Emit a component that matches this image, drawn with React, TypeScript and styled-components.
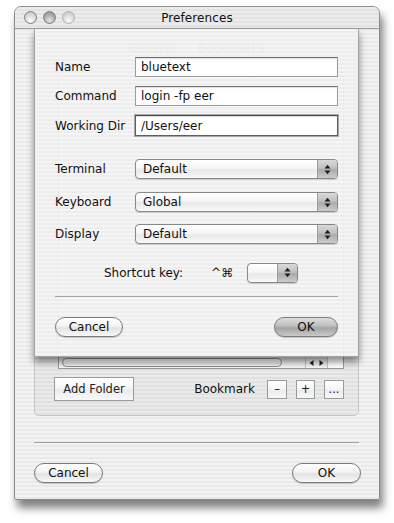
import React from "react";
import styled, { createGlobalStyle } from "styled-components";

const GlobalStyle = createGlobalStyle`
  html, body {
    margin:0;
    padding:0;
    background:#ffffff;
  }
  body {
    font-family:"DejaVu Sans", "Liberation Sans", sans-serif;
    font-size:12px;
    color:#111;
  }
`;

const pinstripe = `repeating-linear-gradient(180deg, #f3f3f3 0px, #f3f3f3 2px, #e9e9e9 2px, #e9e9e9 4px)`;

const Page = styled.div`
  width:394px;
  height:523px;
  box-sizing:border-box;
  padding:6px 0 0 14px;
`;

const Window = styled.div`
  position:relative;
  width:366px;
  height:494px;
  box-sizing:border-box;
  display:flex;
  flex-direction:column;
  border:1px solid #8c8c8c;
  border-radius:7px 7px 2px 2px;
  background:${pinstripe};
  box-shadow:3px 8px 9px rgba(0,0,0,0.5);
`;

const TitleBar = styled.div`
  height:21px;
  display:grid;
  grid-template-columns:1fr auto 1fr;
  align-items:center;
  padding:0 9px;
  border-radius:6px 6px 0 0;
  border-bottom:1px solid #9a9a9a;
  background:repeating-linear-gradient(180deg, #ececec 0px, #ececec 2px, #e2e2e2 2px, #e2e2e2 4px);
`;

const Lights = styled.div`
  display:flex;
  gap:6px;
`;

const Light = styled.span<{ $tone: "light" | "dark" | "dim" }>`
  width:13px;
  height:13px;
  border-radius:50%;
  box-sizing:border-box;
  border:1px solid ${({ $tone }) => $tone === "dim" ? "#b0b0b0" : "#7c7c7c"};
  background:${({ $tone }) => $tone === "dark"
    ? "radial-gradient(circle at 50% 75%, #e6e6e6 0%, #b0b0b0 50%, #8a8a8a 100%)"
    : "radial-gradient(circle at 50% 75%, #fbfbfb 0%, #dcdcdc 50%, #bdbdbd 100%)"};
`;

const Title = styled.div`
  font-size:12px;
  color:#111;
  letter-spacing:0.1px;
`;

const Body = styled.div`
  flex:1;
  display:flex;
  flex-direction:column;
  padding:0 20px 16px 19px;
`;

const TabBar = styled.div`
  height:30px;
  display:flex;
  justify-content:center;
  align-items:flex-end;
  gap:22px;
  padding-bottom:4px;
  box-sizing:border-box;
  color:#666;
`;

const GroupBox = styled.div`
  height:357px;
  box-sizing:border-box;
  display:flex;
  flex-direction:column;
  border:1px solid #c6c6c6;
  border-radius:5px;
  background:rgba(0,0,0,0.035);
  padding:16px 14px 14px 19px;
`;

const TableView = styled.div`
  flex:1;
  display:flex;
  flex-direction:column;
  margin-left:4px;
  border:1px solid #9a9a9a;
  background:#fafafa;
`;

const TableBody = styled.div`
  flex:1;
`;

const HScroll = styled.div`
  height:11px;
  display:flex;
  border-top:1px solid #b4b4b4;
  background:linear-gradient(180deg, #e4e4e4, #f7f7f7);
`;

const Track = styled.div`
  flex:1;
  padding:0 0 0 3px;
  display:flex;
  align-items:center;
`;

const Thumb = styled.div`
  width:220px;
  height:9px;
  box-sizing:border-box;
  border:1px solid #8a8a8a;
  border-radius:5px;
  background:linear-gradient(180deg, #ffffff, #ececec 50%, #dddddd 51%, #f6f6f6);
`;

const ScrollArrows = styled.div`
  width:21px;
  display:flex;
  align-items:center;
  justify-content:space-around;
  border-left:1px solid #c4c4c4;
`;

const Corner = styled.div`
  width:15px;
  border-left:1px solid #c4c4c4;
  background:#fff;
`;

const ToolRow = styled.div`
  display:flex;
  align-items:center;
  margin-top:8px;
`;

const BevelButton = styled.div<{ $width: number; $height: number }>`
  width:${({ $width }) => $width}px;
  height:${({ $height }) => $height}px;
  box-sizing:border-box;
  display:flex;
  align-items:center;
  justify-content:center;
  border:1px solid #9a9a9a;
  background:linear-gradient(180deg, #ffffff, #f4f4f4 50%, #ebebeb 51%, #f8f8f8);
  font-size:11.5px;
  color:#222;
`;

const BookmarkLabel = styled.span`
  margin-left:auto;
  margin-right:12px;
  font-size:12px;
`;

const SmallButtons = styled.div`
  display:flex;
  gap:9px;
`;

const Separator = styled.div<{ $top: number }>`
  margin-top:${({ $top }) => $top}px;
  height:1px;
  background:#a2a2a2;
`;

const ButtonBar = styled.div<{ $top: number; $right?: number }>`
  margin-top:${({ $top }) => $top}px;
  margin-right:${({ $right }) => $right ?? 0}px;
  display:flex;
  justify-content:space-between;
`;

const PushButton = styled.div<{ $width: number; $default?: boolean }>`
  width:${({ $width }) => $width}px;
  height:20px;
  box-sizing:border-box;
  display:flex;
  align-items:center;
  justify-content:center;
  border-radius:10px;
  border:1px solid #7b7b7b;
  background:${({ $default }) => $default
    ? "linear-gradient(180deg, #dedede 0%, #bdbdbd 45%, #a4a4a4 55%, #c9c9c9 100%)"
    : "linear-gradient(180deg, #ffffff 0%, #f3f3f3 45%, #e3e3e3 55%, #f8f8f8 100%)"};
  box-shadow:0 1px 1px rgba(0,0,0,0.2);
  font-size:12px;
  color:#111;
`;

const Sheet = styled.div`
  position:absolute;
  top:22px;
  left:19px;
  width:325px;
  height:328px;
  box-sizing:border-box;
  display:flex;
  flex-direction:column;
  padding:28px 20px 0 20px;
  border:1px solid #a4a4a4;
  border-top:none;
  background:repeating-linear-gradient(180deg, rgba(245,245,245,0.95) 0px, rgba(245,245,245,0.95) 2px, rgba(237,237,237,0.95) 2px, rgba(237,237,237,0.95) 4px);
  box-shadow:0 5px 7px rgba(0,0,0,0.45);
`;

const FormRow = styled.div<{ $top: number }>`
  display:flex;
  align-items:center;
  margin-top:${({ $top }) => $top}px;
`;

const Label = styled.span`
  width:80px;
  font-size:12px;
  color:#111;
`;

const TextField = styled.div<{ $focused?: boolean }>`
  flex:1;
  height:${({ $focused }) => $focused ? 21 : 20}px;
  box-sizing:border-box;
  padding-left:5px;
  display:flex;
  align-items:center;
  background:#ffffff;
  border:1px solid ${({ $focused }) => $focused ? "#5e5e5e" : "#9b9b9b"};
  border-top-color:${({ $focused }) => $focused ? "#4a4a4a" : "#707070"};
  box-shadow:${({ $focused }) => $focused
    ? "0 0 0 1px #a8a8a8, inset 0 1px 1px rgba(0,0,0,0.15)"
    : "inset 0 1px 1px rgba(0,0,0,0.12)"};
  font-size:12px;
`;

const Popup = styled.div<{ $width?: number }>`
  ${({ $width }) => $width ? `width:${$width}px;` : "flex:1;"}
  height:20px;
  box-sizing:border-box;
  display:flex;
  border:1px solid #888;
  border-radius:4px;
  overflow:hidden;
  background:linear-gradient(180deg, #ffffff 0%, #f6f6f6 45%, #e8e8e8 55%, #f9f9f9 100%);
  box-shadow:0 1px 1px rgba(0,0,0,0.15);
`;

const PopupValue = styled.span`
  flex:1;
  padding-left:7px;
  display:flex;
  align-items:center;
  font-size:12px;
`;

const PopupArrows = styled.span`
  width:19px;
  display:flex;
  align-items:center;
  justify-content:center;
  border-left:1px solid #9c9c9c;
  background:linear-gradient(180deg, #dadada 0%, #c0c0c0 45%, #aaaaaa 55%, #cbcbcb 100%);
`;

const ShortcutRow = styled.div`
  display:flex;
  align-items:center;
  margin:18px 0 0 49px;
  height:21px;
`;

const Modifiers = styled.span`
  margin:0 14px 0 28px;
  font-size:12px;
`;

const StepArrows = () => (
  <svg width="7" height="11" viewBox="0 0 7 11">
    <polygon points="0.5,4.5 3.5,0.8 6.5,4.5" fill="#1e1e1e" />
    <polygon points="0.5,6.5 3.5,10.2 6.5,6.5" fill="#1e1e1e" />
  </svg>
);

const ScrollArrow = ({ dir }: { dir: "left" | "right" }) => (
  <svg width="5" height="6" viewBox="0 0 5 6">
    <polygon points={dir === "left" ? "4.5,0 4.5,6 0.5,3" : "0.5,0 0.5,6 4.5,3"} fill="#222" />
  </svg>
);

const PopupButton = ({ value, width }: { value?: string; width?: number }) => (
  <Popup $width={width}>
    <PopupValue>{value}</PopupValue>
    <PopupArrows><StepArrows /></PopupArrows>
  </Popup>
);

export default function App() {
  return (
    <Page>
      <GlobalStyle />
      <Window>
        <TitleBar>
          <Lights>
            <Light $tone="light" />
            <Light $tone="dark" />
            <Light $tone="dim" />
          </Lights>
          <Title>Preferences</Title>
          <span />
        </TitleBar>

        <Body>
          <TabBar>
            <span>General</span>
            <span>Bookmarks</span>
          </TabBar>
          <GroupBox>
            <TableView>
              <TableBody />
              <HScroll>
                <Track><Thumb /></Track>
                <ScrollArrows>
                  <ScrollArrow dir="left" />
                  <ScrollArrow dir="right" />
                </ScrollArrows>
                <Corner />
              </HScroll>
            </TableView>
            <ToolRow>
              <BevelButton $width={80} $height={24}>Add Folder</BevelButton>
              <BookmarkLabel>Bookmark</BookmarkLabel>
              <SmallButtons>
                <BevelButton $width={20} $height={19}>–</BevelButton>
                <BevelButton $width={19} $height={19}>+</BevelButton>
                <BevelButton $width={20} $height={19}>...</BevelButton>
              </SmallButtons>
            </ToolRow>
          </GroupBox>

          <Separator $top={26} />
          <ButtonBar $top={20} $right={-2}>
            <PushButton $width={69}>Cancel</PushButton>
            <PushButton $width={69}>OK</PushButton>
          </ButtonBar>
        </Body>

        <Sheet>
          <FormRow $top={0}>
            <Label>Name</Label>
            <TextField>bluetext</TextField>
          </FormRow>
          <FormRow $top={9}>
            <Label>Command</Label>
            <TextField>login -fp eer</TextField>
          </FormRow>
          <FormRow $top={9}>
            <Label>Working Dir</Label>
            <TextField $focused>/Users/eer</TextField>
          </FormRow>
          <FormRow $top={23}>
            <Label>Terminal</Label>
            <PopupButton value="Default" />
          </FormRow>
          <FormRow $top={13}>
            <Label>Keyboard</Label>
            <PopupButton value="Global" />
          </FormRow>
          <FormRow $top={12}>
            <Label>Display</Label>
            <PopupButton value="Default" />
          </FormRow>
          <ShortcutRow>
            <span>Shortcut key:</span>
            <Modifiers>^⌘</Modifiers>
            <PopupButton width={51} />
          </ShortcutRow>
          <Separator $top={13} />
          <ButtonBar $top={20}>
            <PushButton $width={68}>Cancel</PushButton>
            <PushButton $width={64} $default>OK</PushButton>
          </ButtonBar>
        </Sheet>
      </Window>
    </Page>
  );
}
